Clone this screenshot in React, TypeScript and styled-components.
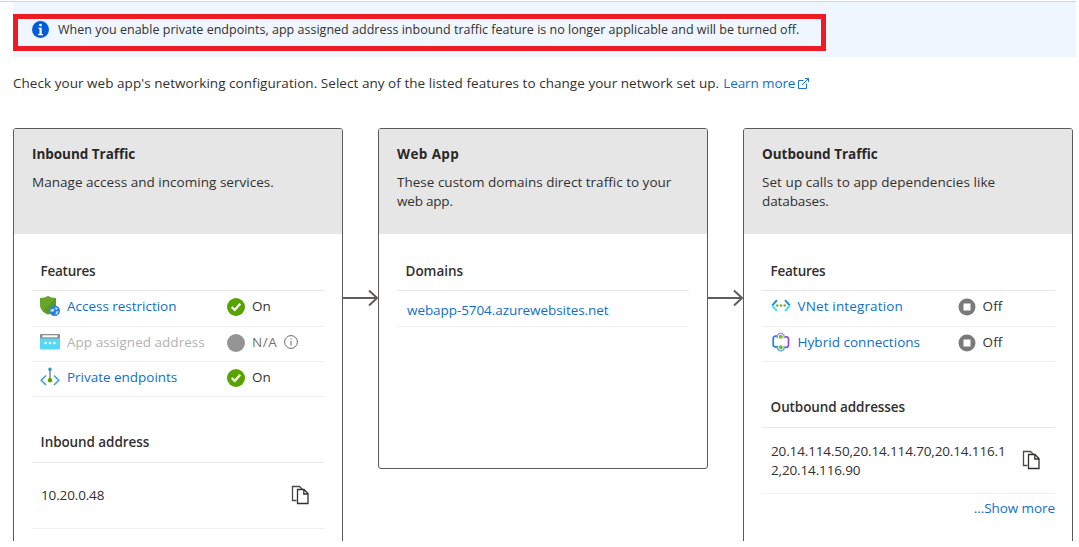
import React from 'react';
import styled, { createGlobalStyle } from 'styled-components';

const Global = createGlobalStyle`
  * { box-sizing: border-box; }
  body { margin: 0; background: #fff; font-family: "Open Sans", "Noto Sans", sans-serif; font-size: 13.5px; color: #323130; }
  svg { flex: none; }
`;

const Page = styled.main`
  width: 1076px;
  height: 541px;
  overflow: hidden;
  padding-top: 1px;
`;
const Blade = styled.div`
  border-top: 1px solid #d4d4d4;
  padding-left: 13px;
`;
const Banner = styled.div`
  position: relative;
  height: 55px;
  background: #eff6ff;
  display: flex;
  align-items: center;
  padding-left: 19px;
  gap: 9px;
`;
const Highlight = styled.div`
  position: absolute;
  left: 0;
  top: 12px;
  width: 813px;
  height: 37px;
  border: 5px solid #ed1c24;
`;
const T = styled.span<{ $ls?: number; $fs?: number; $w?: number; $c?: string }>`
  letter-spacing: ${(p) => p.$ls ?? -0.02}px;
  font-size: ${(p) => p.$fs ?? 13.5}px;
  font-weight: ${(p) => p.$w ?? 400};
  color: ${(p) => p.$c ?? 'inherit'};
  white-space: nowrap;
`;
const Link = styled(T).attrs({ as: 'a' })`
  color: #0f6fca;
  text-decoration: none;
`;
const Intro = styled.p`
  margin: 0;
  height: 71px;
  padding-top: 17px;
  line-height: 19px;
  display: flex;
  align-items: flex-start;
`;
const LearnMore = styled.span`
  display: flex;
  align-items: center;
  gap: 3px;
  margin-left: 4px;
`;
const Cards = styled.div`
  display: flex;
  align-items: flex-start;
`;
const Card = styled.section<{ $h: number }>`
  width: 330px;
  height: ${(p) => p.$h}px;
  flex: none;
  border: 1px solid #5c5b5a;
  border-radius: 3px;
  overflow: hidden;
`;
const CardHead = styled.header`
  height: 105px;
  background: #e6e6e6;
  padding: 16px 18px 0;
  line-height: 19px;
`;
const CardTitle = styled.h2`
  margin: 0 0 9px;
  font-size: 13.5px;
  font-weight: 700;
  line-height: 19px;
  color: #292827;
`;
const Line = styled.div`
  height: 19px;
`;
const Body = styled.div<{ $w: number }>`
  width: ${(p) => p.$w}px;
  margin-left: 18px;
`;
const Section = styled.h3<{ $gap: number; $lh?: number }>`
  margin: ${(p) => p.$gap}px 0 0;
  height: 39px;
  border-bottom: 1px solid #e6e6e6;
  padding-left: 8.6px;
  font-size: 13.5px;
  font-weight: 600;
  line-height: ${(p) => p.$lh ?? 38}px;
`;
const Row = styled.div<{ $h: number; $indent?: number }>`
  display: flex;
  height: ${(p) => p.$h}px;
  border-bottom: 1px solid #efefef;
  padding: 0 0 3px ${(p) => p.$indent ?? 8}px;
  align-items: center;
`;
const DomainRow = styled(Row)`
  padding: 3px 0 0 10px;
`;
const Feature = styled.div`
  width: 187px;
  display: flex;
  align-items: center;
  gap: 7px;
  padding-bottom: 2px;
`;
const Status = styled.div`
  display: flex;
  align-items: center;
  gap: 7px;
`;
const StatusText = styled.div`
  display: flex;
  align-items: center;
  gap: 7px;
  padding-bottom: 2px;
`;
const AddressRow = styled.div`
  display: flex;
  align-items: center;
  justify-content: space-between;
  height: 66px;
  border-bottom: 1px solid #efefef;
  padding: 0 15px 0 9px;
  line-height: 19px;
`;
const CopyButton = styled.span`
  display: flex;
  padding-bottom: 2px;
`;
const More = styled.div`
  height: 28px;
  line-height: 28px;
  text-align: right;
`;
const ArrowWrap = styled.div`
  width: 35px;
  margin-top: 160px;
  height: 20px;
  display: flex;
`;

const Arrow = () => (
  <ArrowWrap>
    <svg width="35" height="20" viewBox="0 0 35 20" fill="none" stroke="#605e5c" strokeWidth="2">
      <path d="M0 10H34M26 2.500L34 10L26 17.500" />
    </svg>
  </ArrowWrap>
);
const Info = () => (
  <svg width="17" height="17" viewBox="0 0 17 17">
    <circle cx="8.5" cy="8.5" r="8.5" fill="#015cda" />
    <circle cx="8.5" cy="4.1" r="1.4" fill="#fff" />
    <path d="M6.500 6.700h3.200v6.300h1.300v1.200H6.200v-1.200h1.300V8h-1z" fill="#fff" />
  </svg>
);
const External = () => (
  <svg width="12" height="14" viewBox="0 0 12 14" fill="none" stroke="#1a73cc" strokeWidth="1">
    <path d="M5.500 3.500h-5v8h8v-5M4 8L10.500 1.500M7 1.500h3.500V5" />
  </svg>
);
const Shield = () => (
  <svg width="20" height="20" viewBox="0 0 20 20">
    <path d="M0 2C4 2 5 1.300 8 0c3 1.300 4 2 8 2v7c0 5-4 7.500-8 9.500C4 16.500 0 14 0 9z" fill="#67a62b" />
    <path d="M16 2v7c0 5-4 7.500-8 9.500-2-1-3.500-2-5-3.300L15.500 2z" fill="#5c9a22" />
    <circle cx="14.700" cy="14.700" r="5.300" fill="#2b7fdc" />
    <path d="M10.500 13.500l3-1 1 1.500-1.500 2-2.500-.5zM15.500 11l2.500 1.500-1.500 1.500-1.500-1zM16 15.500l2.500-.5-1 3-2 .8z" fill="#b9dcfa" />
  </svg>
);
const AppWindow = () => (
  <svg width="20" height="16" viewBox="0 0 20 16">
    <rect width="20" height="15.500" rx="1" fill="#55d8f4" />
    <path d="M0 4.500V1a1 1 0 0 1 1-1h18a1 1 0 0 1 1 1v3.500z" fill="#8f8f8f" />
    <rect x="2.500" y="1.300" width="15" height="2" fill="#fff" />
    <circle cx="5.700" cy="9" r="1.300" fill="#fff" /><circle cx="10" cy="9" r="1.300" fill="#fff" /><circle cx="14.300" cy="9" r="1.300" fill="#fff" />
  </svg>
);
const Endpoint = () => (
  <svg width="20" height="20" viewBox="0 0 20 20" fill="none">
    <path d="M6 8.500L1.200 13.200 6 18M14 8.500l4.800 4.700L14 18" stroke="#3b9fd2" strokeWidth="1.500" />
    <path d="M10 2v11" stroke="#888" strokeWidth="1.500" />
    <circle cx="10" cy="2.300" r="1.700" fill="#2c93cc" /><circle cx="10" cy="13.300" r="2.200" fill="#57a300" />
  </svg>
);
const VNet = () => (
  <svg width="20" height="14" viewBox="0 0 20 14" fill="none" strokeWidth="2">
    <path d="M6 1.200L1.200 6.500M14 1.200l4.800 5.300" stroke="#258ce0" />
    <path d="M1.200 6.500L6 12M18.800 6.500L14 12" stroke="#50dff5" />
    <circle cx="6.300" cy="6.500" r="1.300" fill="#6fb02b" /><circle cx="10" cy="6.500" r="1.300" fill="#6fb02b" /><circle cx="13.700" cy="6.500" r="1.300" fill="#6fb02b" />
  </svg>
);
const Hybrid = () => (
  <svg width="20" height="20" viewBox="0 0 20 20" fill="none">
    <path d="M6 4.200H4.500Q2.200 4.200 2.200 6.500v6Q2.200 14.800 4.500 14.800H6" stroke="#2483d5" strokeWidth="1.700" />
    <path d="M14 4.800h1.200q2.300 0 2.300 2.300v6q0 2.300-2.300 2.300H14" stroke="#8a4fe0" strokeWidth="1.700" />
    <path d="M6.700 6.300a3.500 3.500 0 1 1 6.200 0" stroke="#b18ae8" strokeWidth="1.400" />
    <path d="M6.700 13.800a3.500 3.500 0 1 0 6.200 0" stroke="#5ba3e6" strokeWidth="1.400" />
    <circle cx="9.800" cy="4.700" r="2" fill="#76bc2d" /><circle cx="9.800" cy="15.300" r="2" fill="#76bc2d" />
  </svg>
);
const Check = () => (
  <svg width="18" height="18" viewBox="0 0 18 18">
    <circle cx="9" cy="9" r="9" fill="#57a300" />
    <path d="M4.700 9l3 3L13.300 5.700" fill="none" stroke="#fff" strokeWidth="2.200" />
  </svg>
);
const Dot = () => (
  <svg width="18" height="18" viewBox="0 0 18 18"><circle cx="9" cy="9" r="9" fill="#949494" /></svg>
);
const Stop = () => (
  <svg width="18" height="18" viewBox="0 0 18 18">
    <circle cx="9" cy="9" r="8.500" fill="#7a7a7a" />
    <rect x="5.500" y="5.500" width="7" height="7" fill="#fff" />
  </svg>
);
const Tip = () => (
  <svg width="14" height="14" viewBox="0 0 14 14" fill="none" stroke="#6b6967">
    <circle cx="7" cy="7" r="6.400" /><path d="M7 5.800V10.500M7 3.500v1.200" />
  </svg>
);
const Copy = () => (
  <CopyButton>
    <svg width="18" height="20" viewBox="0 0 18 20" fill="none" stroke="#323130" strokeWidth="1.300">
      <path d="M5.500 15.500H1.500V1.500h7l3 3" stroke="#4c4a48" />
      <path d="M6.500 4.500h6.500L17 8.500V18.500H6.500zM12.800 4.500V9H17" fill="#fff" />
    </svg>
  </CopyButton>
);

type ItemProps = { icon: React.ReactNode; label: React.ReactNode; mark: React.ReactNode; children: React.ReactNode; h: number; indent?: number };
const Item = ({ icon, label, mark, children, h, indent }: ItemProps) => (
  <Row $h={h} $indent={indent}>
    <Feature>{icon}{label}</Feature>
    <Status>{mark}<StatusText>{children}</StatusText></Status>
  </Row>
);

export default function App() {
  return (
    <>
      <Global />
      <Page>
        <Blade>
          <Banner>
            <Info />
            <T $fs={12.5} $ls={0.012}>When you enable private endpoints, app assigned address inbound traffic feature is no longer applicable and will be turned off.</T>
            <Highlight />
          </Banner>
          <Intro>
            <T $ls={0.042}>Check your web app's networking configuration. Select any of the listed features to change your network set up.</T>
            <LearnMore><Link $ls={-0.1}>Learn more</Link><External /></LearnMore>
          </Intro>
          <Cards>
            <Card $h={440}>
              <CardHead>
                <CardTitle><T $w={700} $ls={-0.03}>Inbound Traffic</T></CardTitle>
                <Line><T $ls={0.03}>Manage access and incoming services.</T></Line>
              </CardHead>
              <Body $w={292}>
                <Section $gap={18}><T $w={600} $ls={-0.26}>Features</T></Section>
                <Item h={36} icon={<Shield />} label={<Link>Access restriction</Link>} mark={<Check />}><T $ls={0.07}>On</T></Item>
                <Item h={35} icon={<AppWindow />} label={<T $c="#b3b2b1" $ls={0.02}>App assigned address</T>} mark={<Dot />}><T $c="#757371" $ls={0.6}>N/A</T><Tip /></Item>
                <Item h={35} icon={<Endpoint />} label={<Link>Private endpoints</Link>} mark={<Check />}><T $ls={0.07}>On</T></Item>
                <Section $gap={27} $lh={36}><T $w={600} $ls={-0.08}>Inbound address</T></Section>
                <AddressRow><T $ls={-0.14}>10.20.0.48</T><Copy /></AddressRow>
              </Body>
            </Card>
            <Arrow />
            <Card $h={341}>
              <CardHead>
                <CardTitle><T $w={700} $ls={0.39}>Web App</T></CardTitle>
                <Line><T $ls={0.01}>These custom domains direct traffic to your</T></Line>
                <Line><T $ls={-0.2}>web app.</T></Line>
              </CardHead>
              <Body $w={292}>
                <Section $gap={18}><T $w={600} $ls={-0.06}>Domains</T></Section>
                <DomainRow $h={36}><Link $ls={-0.07}>webapp-5704.azurewebsites.net</Link></DomainRow>
              </Body>
            </Card>
            <Arrow />
            <Card $h={440}>
              <CardHead>
                <CardTitle><T $w={700} $ls={0}>Outbound Traffic</T></CardTitle>
                <Line><T $ls={0.06}>Set up calls to app dependencies like</T></Line>
                <Line><T $ls={-0.11}>databases.</T></Line>
              </CardHead>
              <Body $w={293}>
                <Section $gap={18}><T $w={600} $ls={-0.26}>Features</T></Section>
                <Item h={36} indent={8.6} icon={<VNet />} label={<Link $ls={0.13}>VNet integration</Link>} mark={<Stop />}><T $ls={0.06}>Off</T></Item>
                <Item h={35} indent={8.6} icon={<Hybrid />} label={<Link $ls={0.03}>Hybrid connections</Link>} mark={<Stop />}><T $ls={0.06}>Off</T></Item>
                <Section $gap={27} $lh={36}><T $w={600} $ls={-0.09}>Outbound addresses</T></Section>
                <AddressRow>
                  <div><Line><T $ls={-0.136}>20.14.114.50,20.14.114.70,20.14.116.1</T></Line><Line><T $ls={-0.136}>2,20.14.116.90</T></Line></div>
                  <Copy />
                </AddressRow>
                <More><Link $ls={-0.07}>...Show more</Link></More>
              </Body>
            </Card>
          </Cards>
        </Blade>
      </Page>
    </>
  );
}
